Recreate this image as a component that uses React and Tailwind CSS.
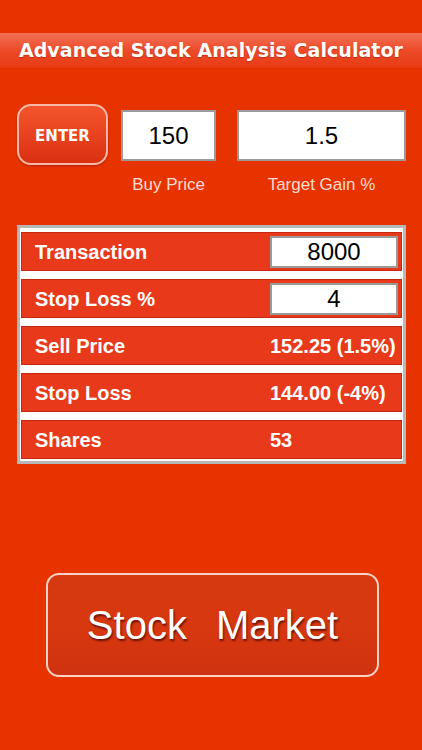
export default function App() {
  const rows = [
    { label: "Transaction", value: "8000", input: true },
    { label: "Stop Loss %", value: "4", input: true },
    { label: "Sell Price", value: "152.25 (1.5%)" },
    { label: "Stop Loss", value: "144.00 (-4%)" },
    { label: "Shares", value: "53" },
  ];
  return (
    <div className="w-[422px] h-[750px] bg-[#e63300] flex flex-col overflow-hidden" style={{ fontFamily: '"Liberation Sans", Arial, sans-serif' }}>
      <div className="mt-[33px] h-[35px] bg-gradient-to-b from-[#f37054] via-[#ec4a28] to-[#e83a12] flex items-center justify-center">
        <span className="text-white text-[19px] font-bold tracking-[0.05px] [font-family:'DejaVu_Sans',Verdana,sans-serif] [text-shadow:0_1px_1px_rgba(120,20,0,0.4)]">
          Advanced Stock Analysis Calculator
        </span>
      </div>

      <div className="mt-[36px] flex items-start pl-[17px]">
        <div className="w-[91px] h-[61px] rounded-[14px] border-2 border-[#f9b8a6] bg-gradient-to-b from-[#f2542c] via-[#e94220] to-[#d93010] flex items-center justify-center shadow-[0_1px_2px_rgba(100,0,0,0.4)]">
          <span className="text-white text-[15px] font-bold mt-[4px] [font-family:'DejaVu_Sans',Verdana,sans-serif]">ENTER</span>
        </div>
        <div className="ml-[13px] mt-[6px] flex flex-col items-center">
          <div className="w-[95px] h-[51px] bg-white border-2 border-[#9a9a9a] flex items-center justify-center text-[24px] text-black">150</div>
          <div className="mt-[15px] h-[17px] text-[17px] text-[#fddbd0] leading-none">Buy Price</div>
        </div>
        <div className="ml-[21px] mt-[6px] flex flex-col items-center">
          <div className="w-[169px] h-[51px] bg-white border-2 border-[#9a9a9a] flex items-center justify-center text-[24px] text-black">1.5</div>
          <div className="mt-[15px] h-[17px] text-[17px] text-[#fddbd0] leading-none">Target Gain %</div>
        </div>
      </div>

      <div className="mt-[32px] ml-[17px] w-[389px] h-[239px] border-[3px] border-[#b8b8b8] bg-white px-[1px] pt-[4px] flex flex-col gap-[8px]">
        {rows.map((r) => (
          <div key={r.label} className="h-[39px] shrink-0 bg-[#e8391b] border border-[#c42810] flex items-center pl-[13px] pr-[3px]">
            <span className="flex-1 text-white text-[20px] font-bold">{r.label}</span>
            {r.input ? (
              <div className="w-[128px] h-[32px] bg-white border-2 border-[#9a9a9a] flex items-center justify-center text-[24px] text-black">{r.value}</div>
            ) : (
              <span className="w-[128px] text-white text-[20px] font-bold whitespace-nowrap">{r.value}</span>
            )}
          </div>
        ))}
      </div>

      <div className="mt-[109px] ml-[46px] w-[333px] h-[104px] rounded-[13px] border-2 border-[#fbd3c6] bg-gradient-to-b from-[#d6380f] via-[#d8380f] to-[#cf3210] flex items-center justify-center gap-[29px] text-white text-[40px] [text-shadow:1px_2px_2px_rgba(60,0,0,0.7)]">
        <span>Stock</span>
        <span>Market</span>
      </div>
    </div>
  );
}
